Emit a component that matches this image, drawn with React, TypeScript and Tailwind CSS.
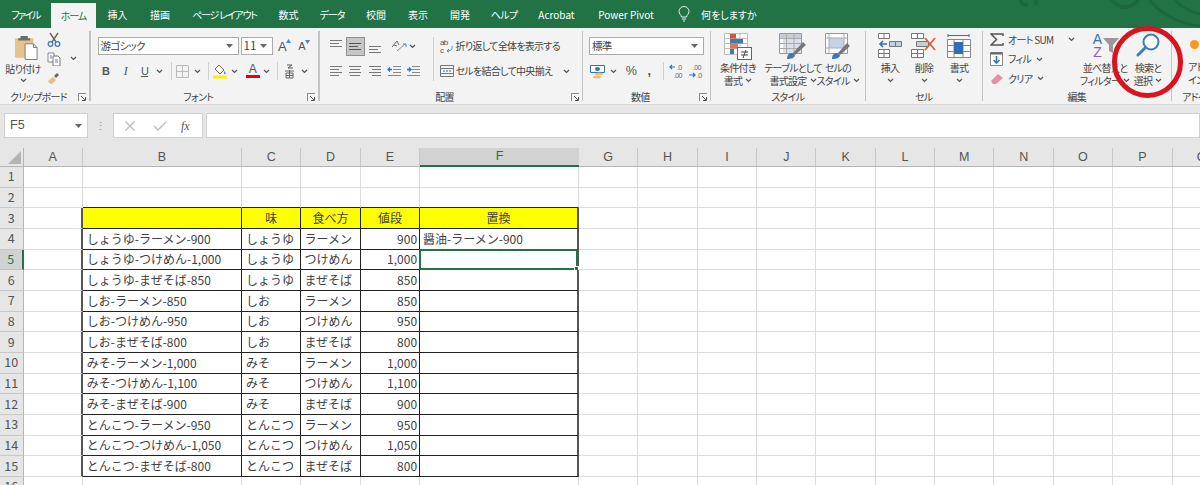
import type { ReactNode } from "react";

const tabs = [
  { label: "ファイル", w: "w-[51px] tracking-[-1.5px]" },
  { label: "ホーム", w: "w-[45px] tracking-[-1px]", active: true },
  { label: "挿入", w: "w-[43px]" },
  { label: "描画", w: "w-[42px]" },
  { label: "ページ レイアウト", w: "w-[87px] tracking-[-1.2px]" },
  { label: "数式", w: "w-[41px]" },
  { label: "データ", w: "w-[46px] tracking-[-1px]" },
  { label: "校閲", w: "w-[42px]" },
  { label: "表示", w: "w-[42px]" },
  { label: "開発", w: "w-[42px]" },
  { label: "ヘルプ", w: "w-[46px] tracking-[-0.7px]" },
  { label: "Acrobat", w: "w-[59px]" },
  { label: "Power Pivot", w: "w-[80px]" },
];

const columns = ["A", "B", "C", "D", "E", "F", "G", "H", "I", "J", "K", "L", "M", "N", "O", "P", "Q"];

const sheet = [
  ["しょうゆ-ラーメン-900", "しょうゆ", "ラーメン", "900", "醤油-ラーメン-900"],
  ["しょうゆ-つけめん-1,000", "しょうゆ", "つけめん", "1,000", ""],
  ["しょうゆ-まぜそば-850", "しょうゆ", "まぜそば", "850", ""],
  ["しお-ラーメン-850", "しお", "ラーメン", "850", ""],
  ["しお-つけめん-950", "しお", "つけめん", "950", ""],
  ["しお-まぜそば-800", "しお", "まぜそば", "800", ""],
  ["みそ-ラーメン-1,000", "みそ", "ラーメン", "1,000", ""],
  ["みそ-つけめん-1,100", "みそ", "つけめん", "1,100", ""],
  ["みそ-まぜそば-900", "みそ", "まぜそば", "900", ""],
  ["とんこつ-ラーメン-950", "とんこつ", "ラーメン", "950", ""],
  ["とんこつ-つけめん-1,050", "とんこつ", "つけめん", "1,050", ""],
  ["とんこつ-まぜそば-800", "とんこつ", "まぜそば", "800", ""],
];

function Chevron() {
  return (
    <svg width="7" height="5" viewBox="0 0 7 5" className="shrink-0">
      <path d="M1 1l2.5 2.5L6 1" fill="none" stroke="#555" strokeWidth="1.2" />
    </svg>
  );
}

function Caret() {
  return (
    <svg width="7" height="4" viewBox="0 0 7 4" className="shrink-0">
      <path d="M0 0h7L3.5 4z" fill="#666" />
    </svg>
  );
}

function Launcher() {
  return (
    <svg width="9" height="9" viewBox="0 0 9 9" className="absolute right-[2px] top-[3px]">
      <path d="M.5 8V.5H8" fill="none" stroke="#888" />
      <path d="M3 3l4 4M4 7.5h3.5V4" fill="none" stroke="#555" />
    </svg>
  );
}

function Lines({ y, align, selected }: { y: number[]; align: "l" | "c" | "r"; selected?: boolean }) {
  return (
    <svg width="14" height="16" viewBox="0 0 14 16">
      {y.map((v, i) => {
        const short = i % 2 === 1;
        const x1 = short && align === "r" ? 4 : short && align === "c" ? 2 : 1;
        const x2 = short && align === "l" ? 10 : short && align === "c" ? 12 : 13;
        return <path key={v} d={`M${x1} ${v + 0.5}H${x2}`} stroke={selected ? "#555" : "#777"} />;
      })}
    </svg>
  );
}

function Box({ className, children }: { className: string; children?: ReactNode }) {
  return <div className={`flex shrink-0 items-center justify-center ${className}`}>{children}</div>;
}

function Combo({ className, text, textClass }: { className: string; text: string; textClass?: string }) {
  return (
    <div className={`flex h-[18px] shrink-0 items-center justify-between border border-[#ababab] bg-white pl-[2px] pr-[5px] text-[10.5px] ${className}`}>
      <span className={textClass}>{text}</span>
      <Caret />
    </div>
  );
}

function Sep({ className }: { className: string }) {
  return <div className={`w-px shrink-0 bg-[#d0d0d0] ${className}`} />;
}

function Group({
  className,
  label,
  labelClass,
  launcher,
  children,
}: {
  className: string;
  label: string;
  labelClass?: string;
  launcher?: boolean;
  children: ReactNode;
}) {
  return (
    <div className={`relative flex h-full shrink-0 flex-col ${className}`}>
      <div className="h-[62px]">{children}</div>
      <div className={`relative flex h-[14px] items-center whitespace-nowrap leading-none ${labelClass ?? "justify-center"} ${launcher ? "pr-[12px]" : ""}`}>
        {label}
      </div>
      {launcher && (
        <div className="absolute bottom-0 right-0 h-[14px] w-[12px]">
          <Launcher />
        </div>
      )}
    </div>
  );
}

function GroupLine() {
  return <div className="my-[3px] w-[1.5px] shrink-0 bg-[#c4c4c4]" />;
}

function BigButton({ className, icon, lines }: { className: string; icon: ReactNode; lines: ReactNode[] }) {
  return (
    <div className={`flex shrink-0 flex-col items-center pt-[5px] ${className}`}>
      <div className="flex h-[28px] items-start justify-center">{icon}</div>
      {lines.map((line, i) => (
        <div key={i} className="flex h-[13px] items-center gap-[3px] whitespace-nowrap leading-none">
          {line}
        </div>
      ))}
    </div>
  );
}

function PasteIcon() {
  return (
    <svg width="24" height="27" viewBox="0 0 26 28">
      <rect x="1" y="4" width="20" height="21" rx="1.5" fill="#e6c38a" />
      <path d="M7 4V1.5h8V4h2.5v2.5h-13V4z" fill="#6d6d6d" />
      <path d="M12 10h9l4 4v13H12z" fill="#fff" stroke="#777" />
      <path d="M21 10v4h4" fill="none" stroke="#777" />
    </svg>
  );
}

function ScissorsIcon() {
  return (
    <svg width="14" height="15" viewBox="0 0 14 15">
      <path d="M3 1l6 9M11 1L5 10" stroke="#666" strokeWidth="1.4" fill="none" />
      <circle cx="3.5" cy="12" r="2.3" fill="none" stroke="#3f78b5" strokeWidth="1.3" />
      <circle cx="10.5" cy="12" r="2.3" fill="none" stroke="#3f78b5" strokeWidth="1.3" />
    </svg>
  );
}

function CopyIcon() {
  return (
    <svg width="14" height="14" viewBox="0 0 14 14">
      <path d="M1 1h6v9H1z" fill="#fff" stroke="#888" />
      <path d="M6 4h5l2 2v8H6z" fill="#fff" stroke="#777" />
      <path d="M8 8h3M8 10h3M3 4h2M3 6h2" stroke="#4a86c0" />
    </svg>
  );
}

function BrushIcon() {
  return (
    <svg width="14" height="14" viewBox="0 0 14 14">
      <path d="M1 10l5-4 3 3-4 4c-2 0-3-1-4-3z" fill="#e4bd7f" />
      <path d="M7 5l3-3 2 2-3 3z" fill="#666" />
    </svg>
  );
}

function SizeA({ up }: { up?: boolean }) {
  return (
    <div className="flex items-start">
      <span className={`font-['Liberation_Sans',sans-serif] leading-none text-[#555] ${up ? "text-[13px]" : "text-[11px]"}`}>A</span>
      <svg width="5" height="4" viewBox="0 0 5 4" className="-mt-[1px]">
        <path d={up ? "M0 4h5L2.5 0z" : "M0 0h5L2.5 4z"} fill="#4a86c0" />
      </svg>
    </div>
  );
}

function BordersIcon() {
  return (
    <svg width="13" height="13" viewBox="0 0 13 13">
      <path d="M.5.5h12v12H.5zM6.500.5v12M.5 6.500h12" fill="none" stroke="#bbb" />
    </svg>
  );
}

function FillIcon() {
  return (
    <svg width="15" height="15" viewBox="0 0 15 15">
      <path d="M6 1l5 5-4 4-5-5z" fill="#fff" stroke="#666" />
      <path d="M11 7c1 1 2 2 1.5 3-.7.5-1.5 0-1.5-1z" fill="#4a7fb5" />
      <rect x="0" y="11.5" width="14" height="3" fill="#ffef00" />
    </svg>
  );
}

function FontColorIcon() {
  return (
    <div className="flex w-[14px] flex-col items-center">
      <span className="font-['Liberation_Sans',sans-serif] text-[12px] leading-[11px] text-[#555]">A</span>
      <div className="h-[3px] w-[14px] bg-[#e60012]" />
    </div>
  );
}

function PhoneticIcon() {
  return (
    <svg width="11" height="15" viewBox="0 0 11 15">
      <path d="M3 1h5L4 4h5" fill="none" stroke="#555" />
      <path d="M1 7h9M2 9h7v5H2zM2 11.500h7M5.500 6v8" fill="none" stroke="#666" />
    </svg>
  );
}

function OrientIcon() {
  return (
    <svg width="16" height="14" viewBox="0 0 16 14">
      <path d="M1 8l5-6 2 4M3 6l3 1" fill="none" stroke="#666" />
      <path d="M6 12l8-7" stroke="#888" />
      <path d="M12 5h3v3" fill="none" stroke="#4a86c0" />
    </svg>
  );
}

function IndentIcon({ out }: { out?: boolean }) {
  return (
    <svg width="14" height="12" viewBox="0 0 14 12">
      <path d="M6 1.500h8M6 4.500h8M6 7.500h8M1 10.500h13" stroke="#888" />
      <path d={out ? "M5 4.500H1M3 2.500l-2 2 2 2" : "M1 4.500h4M3 2.500l2 2-2 2"} fill="none" stroke="#2f75b5" strokeWidth="1.3" />
    </svg>
  );
}

function WrapIcon() {
  return (
    <svg width="14" height="16" viewBox="0 0 14 16">
      <text x="0" y="7" fontSize="8" fill="#555" fontFamily="Liberation Sans">ab</text>
      <text x="0" y="15" fontSize="8" fill="#555" fontFamily="Liberation Sans">c</text>
      <path d="M12 8c1 4-2 5-5 5M9 11l-2 2 2 1" fill="none" stroke="#4a86c0" />
    </svg>
  );
}

function MergeIcon() {
  return (
    <svg width="14" height="14" viewBox="0 0 14 14">
      <path d="M.5 1.500h13v11H.5zM.5 4.500h13M.5 9.500h13" fill="none" stroke="#777" />
      <path d="M3 7h8" stroke="#2f75b5" strokeDasharray="2 1" />
    </svg>
  );
}

function AccountIcon() {
  return (
    <svg width="16" height="15" viewBox="0 0 16 15">
      <path d="M.5 1.500h14v7H.5z" fill="#fff" stroke="#2f75b5" />
      <ellipse cx="7.500" cy="5" rx="2.500" ry="2" fill="#2f75b5" />
      <ellipse cx="9" cy="10" rx="4" ry="1.500" fill="#e8c27e" />
      <ellipse cx="7" cy="13" rx="4" ry="1.500" fill="#e8c27e" />
    </svg>
  );
}

function DecimalIcon({ more }: { more?: boolean }) {
  return (
    <svg width="16" height="16" viewBox="0 0 16 16">
      <text x={more ? 8 : 5} y="7" fontSize="7" fill="#666" fontFamily="Liberation Sans">{more ? ".0" : ".00"}</text>
      <text x={more ? 5 : 9} y="15" fontSize="7" fill="#666" fontFamily="Liberation Sans">{more ? ".00" : ".0"}</text>
      <path d={more ? "M6 4H1M3 2L1 4l2 2" : "M1 12h6M5 10l2 2-2 2"} fill="none" stroke="#2f75b5" strokeWidth="1.2" />
    </svg>
  );
}

function CondIcon() {
  return (
    <svg width="28" height="27" viewBox="0 0 28 27">
      <path d="M.5.5h23v21H.5zM8 .5v21M16 .5v21M.5 5.500h23M.5 10.500h23M.5 15.500h23" fill="#fff" stroke="#bbb" />
      <rect x="6" y="1" width="6" height="4.500" fill="#c9573a" />
      <rect x="6" y="6" width="13" height="4.500" fill="#3f78b5" />
      <rect x="6" y="11" width="8" height="4.500" fill="#d77a4f" />
      <rect x="6" y="16" width="4" height="5" fill="#3f78b5" />
      <rect x="13.500" y="14.500" width="14" height="12" fill="#fff" stroke="#666" />
      <path d="M17 19h7M17 22h7M22 17l-3 8" stroke="#444" fill="none" />
    </svg>
  );
}

function TableIcon() {
  return (
    <svg width="28" height="27" viewBox="0 0 28 27">
      <path d="M.5.5h22v20H.5z" fill="#fff" stroke="#999" />
      <rect x="1" y="1" width="21" height="4" fill="#c3cedb" />
      <path d="M4 5h18v15H4z" fill="#d8e1ec" />
      <path d="M7.500.5v20M15 .5v20M.5 5.500h22M.5 10.500h22M.5 15.500h22" stroke="#aaa" />
      <path d="M14 20l10-11 3 3-11 10z" fill="#777" />
      <path d="M8 26c0-4 2-6 5-6l3 2c0 3-4 4-8 4z" fill="#3f78b5" />
    </svg>
  );
}

function StyleIcon() {
  return (
    <svg width="26" height="27" viewBox="0 0 26 27">
      <path d="M.5.5h22v20H.5z" fill="#fff" stroke="#999" />
      <rect x="4" y="5" width="15" height="10" fill="#c5d3e3" />
      <path d="M4 .5v20M19 .5v20M.5 5h22M.5 15h22" stroke="#aaa" />
      <path d="M13 20l9-10 3 3-10 9z" fill="#777" />
      <path d="M7 26c0-4 2-6 5-6l3 2c0 3-4 4-8 4z" fill="#3f78b5" />
    </svg>
  );
}

function InsertIcon() {
  return (
    <svg width="24" height="25" viewBox="0 0 24 25">
      <path d="M.5.5h11v5H.5zM6 .5v5M.5 16.500h11v8H.5zM6 16.500v8M.5 20.500h11" fill="#fff" stroke="#777" />
      <path d="M11.500 8.500h12v5h-12zM17.500 8.500v5" fill="#c3cfdc" stroke="#777" />
      <path d="M9 11H2M5 8l-3 3 3 3" fill="none" stroke="#2f75b5" strokeWidth="1.6" />
    </svg>
  );
}

function DeleteIcon() {
  return (
    <svg width="26" height="25" viewBox="0 0 26 25">
      <path d="M.5.5h12v5H.5zM6.500.5v5M.5 16.500h12v8H.5zM6.500 16.500v8M.5 20.500h12" fill="#fff" stroke="#777" />
      <path d="M5.500 8.500h12v5h-12z" fill="#c3cfdc" stroke="#777" />
      <path d="M14 5l10 12M24 5L14 17" stroke="#d9603b" strokeWidth="1.8" />
    </svg>
  );
}

function FormatIcon() {
  return (
    <svg width="24" height="27" viewBox="0 0 24 27">
      <path d="M1 2.500h21M1 1v3M22 1v3" stroke="#2f75b5" />
      <path d="M.5 6.500h23v18H.5zM7 6.500v18M16 6.500v18M.5 12.500h23M.5 18.500h23" fill="#fff" stroke="#888" />
      <rect x="7" y="9" width="9" height="12" fill="#2f6fb5" />
    </svg>
  );
}

function SigmaIcon() {
  return (
    <svg width="14" height="13" viewBox="0 0 14 13">
      <path d="M13 3V1H1l5.500 5.500L1 12h12v-2" fill="none" stroke="#555" strokeWidth="1.5" />
    </svg>
  );
}

function FillDownIcon() {
  return (
    <svg width="13" height="14" viewBox="0 0 13 14">
      <path d="M.5.5h12v13H.5z" fill="#fff" stroke="#888" />
      <path d="M.5 .5h12v2H.5z" fill="#666" />
      <path d="M6.500 4v7M3.500 8l3 3 3-3" fill="none" stroke="#2f75b5" strokeWidth="1.6" />
    </svg>
  );
}

function EraserIcon() {
  return (
    <svg width="14" height="12" viewBox="0 0 14 12">
      <path d="M1 8l7-7 5 4-7 6H3z" fill="#e98fa5" />
    </svg>
  );
}

function SortIcon() {
  return (
    <div className="flex h-[27px] w-[32px] pl-[3px] font-['Liberation_Sans',sans-serif] text-[14px] leading-[13px] tracking-normal">
      <div className="flex w-[11px] flex-col items-center">
        <span className="text-[#2f75b5]">A</span>
        <span className="text-[#8a5fb0]">Z</span>
      </div>
      <svg width="16" height="16" viewBox="0 0 16 16" className="mt-[5px]">
        <path d="M0 0h16l-6 7v8l-4-2V7z" fill="#999" />
      </svg>
    </div>
  );
}

function SearchIcon() {
  return (
    <svg width="24" height="24" viewBox="0 0 24 24">
      <circle cx="15" cy="9" r="7.500" fill="#fff" stroke="#3f7db8" strokeWidth="2" />
      <path d="M9.500 14.500L2 22" stroke="#3f7db8" strokeWidth="3" strokeLinecap="round" />
    </svg>
  );
}

function BulbIcon() {
  return (
    <svg width="12" height="16" viewBox="0 0 12 16">
      <path d="M3.500 11C3 8.500 1 8 1 5.500a5 5 0 0 1 10 0C11 8 9 8.500 8.500 11zM4 13h4M5 15h2" fill="none" stroke="#e8f1ec" />
    </svg>
  );
}

function Ribbon() {
  return (
    <div className="flex h-[76px] bg-[#f3f3f3] text-[10px] tracking-[-0.7px] text-[#444]">
      <Group className="w-[89px]" label="クリップボード" launcher>
        <div className="flex">
          <div className="flex w-[46px] flex-col items-center pl-[6px] pt-[6px]">
            <div className="h-[27px]">
              <PasteIcon />
            </div>
            <div className="-ml-[6px] mt-[1px] flex h-[13px] items-center whitespace-nowrap leading-none">貼り付け</div>
            <div className="-ml-[6px] mt-[3px]">
              <Chevron />
            </div>
          </div>
          <div className="flex w-[16px] flex-col items-center pt-[4px]">
            <Box className="h-[15px]"><ScissorsIcon /></Box>
            <Box className="mt-[4px] h-[15px]"><CopyIcon /></Box>
            <Box className="mt-[4px] h-[15px]"><BrushIcon /></Box>
          </div>
          <div className="pl-[8px] pt-[28px]">
            <Chevron />
          </div>
        </div>
      </Group>
      <GroupLine />
      <Group className="w-[227.500px]" label="フォント" launcher>
        <div className="mt-[9px] flex h-[18px] items-center pl-[7px]">
          <Combo className="w-[141px]" text="游ゴシック" />
          <Combo className="ml-[2px] w-[32px]" text="11" textClass="text-[11.5px] tracking-normal" />
          <Box className="ml-[2px] w-[20px]"><SizeA up /></Box>
          <Box className="w-[19px]"><SizeA /></Box>
        </div>
        <div className="mt-[7px] flex h-[18px] items-center pl-[5px]">
          <Box className="w-[20px] font-['Liberation_Sans',sans-serif] text-[11px] font-bold text-[#555]">B</Box>
          <Box className="w-[20px] font-['Liberation_Serif',serif] text-[12px] italic text-[#555]">I</Box>
          <Box className="w-[18px] font-['Liberation_Sans',sans-serif] text-[11px] text-[#555] underline">U</Box>
          <Box className="w-[12px]"><Chevron /></Box>
          <Sep className="ml-[5px] h-[18px]" />
          <Box className="ml-px w-[20px]"><BordersIcon /></Box>
          <Box className="w-[10px]"><Chevron /></Box>
          <Sep className="ml-[5px] h-[18px]" />
          <Box className="ml-[2px] w-[20px]"><FillIcon /></Box>
          <Box className="w-[8px]"><Chevron /></Box>
          <Box className="ml-[4px] w-[20px]"><FontColorIcon /></Box>
          <Box className="w-[8px]"><Chevron /></Box>
          <Sep className="ml-[6px] h-[18px]" />
          <Box className="ml-[2px] w-[20px]"><PhoneticIcon /></Box>
          <Box className="w-[10px]"><Chevron /></Box>
        </div>
      </Group>
      <GroupLine />
      <Group className="w-[262px]" label="配置" launcher>
        <div className="flex pt-[9px]">
          <div className="w-[113px] pl-[6px]">
            <div className="flex h-[18px] items-center">
              <Box className="w-[20px]"><Lines y={[2, 5, 8]} align="l" /></Box>
              <Box className="h-[19px] w-[19px] border border-[#8e8e8e] bg-[#c6c6c6]"><Lines y={[5, 8, 11]} align="l" selected /></Box>
              <Box className="w-[20px]"><Lines y={[8, 11, 14]} align="l" /></Box>
              <Box className="ml-[4px] w-[20px]"><OrientIcon /></Box>
              <Box className="w-[8px]"><Chevron /></Box>
            </div>
            <div className="mt-[7px] flex h-[18px] items-center">
              <Box className="w-[20px]"><Lines y={[3, 6, 9, 12]} align="l" /></Box>
              <Box className="w-[19px]"><Lines y={[3, 6, 9, 12]} align="c" /></Box>
              <Box className="w-[20px]"><Lines y={[3, 6, 9, 12]} align="r" /></Box>
              <Box className="w-[19px]"><IndentIcon out /></Box>
              <Box className="w-[19px]"><IndentIcon /></Box>
            </div>
          </div>
          <Sep className="h-[44px]" />
          <div className="pl-[6px]">
            <div className="flex h-[18px] items-center whitespace-nowrap leading-none">
              <Box className="w-[16px] justify-start"><WrapIcon /></Box>
              折り返して全体を表示する
            </div>
            <div className="mt-[7px] flex h-[18px] w-[130px] items-center whitespace-nowrap leading-none">
              <Box className="w-[16px] justify-start"><MergeIcon /></Box>
              セルを結合して中央揃え
              <div className="ml-auto"><Chevron /></div>
            </div>
          </div>
        </div>
      </Group>
      <GroupLine />
      <Group className="w-[126.500px]" label="数値" launcher>
        <div className="pl-[6px] pt-[9px]">
          <Combo className="w-[115px]" text="標準" />
          <div className="mt-[7px] flex h-[18px] items-center">
            <Box className="w-[18px]"><AccountIcon /></Box>
            <Box className="w-[12px]"><Chevron /></Box>
            <Box className="ml-[3px] w-[18px] font-['Liberation_Sans',sans-serif] text-[12.5px] text-[#555]">%</Box>
            <Box className="w-[18px] font-['Liberation_Sans',sans-serif] text-[12.5px] font-bold text-[#555]">,</Box>
            <Sep className="ml-[5px] h-[18px]" />
            <Box className="ml-[4px] w-[18px]"><DecimalIcon more /></Box>
            <Box className="ml-px w-[18px]"><DecimalIcon /></Box>
          </div>
        </div>
      </Group>
      <GroupLine />
      <Group className="w-[153.500px]" label="スタイル">
        <div className="flex">
          <BigButton className="w-[54px]" icon={<CondIcon />} lines={["条件付き", <>書式 <Chevron /></>]} />
          <BigButton className="ml-[2px] w-[52px]" icon={<TableIcon />} lines={["テーブルとして", <>書式設定 <Chevron /></>]} />
          <BigButton className="-ml-[2px] w-[42px]" icon={<StyleIcon />} lines={["セルの", <>スタイル <Chevron /></>]} />
        </div>
      </Group>
      <GroupLine />
      <Group className="w-[115.500px]" label="セル">
        <div className="flex pl-[7px]">
          <BigButton className="w-[34px]" icon={<InsertIcon />} lines={["挿入", <Chevron />]} />
          <BigButton className="w-[34px]" icon={<DeleteIcon />} lines={["削除", <Chevron />]} />
          <BigButton className="ml-px w-[34px]" icon={<FormatIcon />} lines={["書式", <Chevron />]} />
        </div>
      </Group>
      <GroupLine />
      <Group className="w-[187.500px]" label="編集">
        <div className="flex">
          <div className="w-[100px] whitespace-nowrap pl-[7px] pt-[2px] leading-none">
            <div className="flex h-[19.500px] items-center">
              <Box className="w-[18px] justify-start"><SigmaIcon /></Box>
              オート SUM
              <div className="ml-auto mr-[8px]"><Chevron /></div>
            </div>
            <div className="flex h-[19.500px] items-center">
              <Box className="w-[18px] justify-start"><FillDownIcon /></Box>
              フィル
              <div className="ml-[5px]"><Chevron /></div>
            </div>
            <div className="flex h-[19.500px] items-center">
              <Box className="w-[18px] justify-start"><EraserIcon /></Box>
              クリア
              <div className="ml-[5px]"><Chevron /></div>
            </div>
          </div>
          <BigButton className="w-[44px]" icon={<SortIcon />} lines={["並べ替えと", <>フィルター <Chevron /></>]} />
          <BigButton className="w-[42px]" icon={<SearchIcon />} lines={["検索と", <>選択 <Chevron /></>]} />
        </div>
      </Group>
      <GroupLine />
      <Group className="flex-1 overflow-hidden" label="アドイン" labelClass="justify-start pl-[10px]">
        <div className="whitespace-nowrap pl-[16px] pt-[12px] leading-[13px]">
          <div className="ml-[2px] h-[9px] w-[9px] rounded-full bg-[#f59a23]" />
          <div className="mt-[11px]">アド</div>
          <div>イン</div>
        </div>
      </Group>
    </div>
  );
}

function FormulaBar() {
  return (
    <div className="flex h-[44px] border-t border-[#d8d8d8] bg-[#e6e6e6] pb-[10px] pl-[4px] pt-[8px]">
      <div className="flex w-[84px] items-center justify-between border border-[#d0d0d0] bg-white px-[5px] font-['Liberation_Sans',sans-serif] text-[12.5px] text-[#555]">
        F5
        <Caret />
      </div>
      <div className="flex w-[25px] items-center justify-center text-[11px] leading-none text-[#999]">⋮</div>
      <div className="flex w-[90px] items-center border border-[#d0d0d0] bg-white pl-[10px]">
        <svg width="12" height="12" viewBox="0 0 12 12">
          <path d="M1.500 1.500l9 9M10.500 1.500l-9 9" stroke="#bbb" strokeWidth="1.300" />
        </svg>
        <svg width="14" height="12" viewBox="0 0 14 12" className="ml-[17px]">
          <path d="M1 6l4 4 8-8" fill="none" stroke="#bbb" strokeWidth="1.300" />
        </svg>
        <span className="ml-[14px] font-['Liberation_Serif',serif] text-[12px] italic leading-none text-[#555]">fx</span>
      </div>
      <div className="ml-[3px] flex-1 border border-[#d0d0d0] bg-white" />
    </div>
  );
}

function Sheet() {
  return (
    <div className="grid grid-cols-[23.500px_59.350px_159.200px_59.350px_59.350px_59.350px_159px_repeat(11,59.350px)] grid-rows-[19px] auto-rows-[20.670px] bg-white text-[12px] text-[#404040] [font-feature-settings:normal]">
      <div className="relative border-b border-r border-[#b5b5b5] bg-[#e6e6e6]">
        <div className="absolute bottom-[2px] right-[2px] h-0 w-0 border-b-[13px] border-l-[13px] border-b-[#b4b4b4] border-l-transparent" />
      </div>
      {columns.map((c) => (
        <div
          key={c}
          className={`flex items-center justify-center font-['Liberation_Sans',sans-serif] text-[12.500px] ${
            c === "F"
              ? "border-b-2 border-[#217346] bg-[#d2d2d2] text-[#217346]"
              : "border-b border-r border-b-[#b5b5b5] border-r-[#c8c8c8] bg-[#e6e6e6] text-[#555]"
          }`}
        >
          {c}
        </div>
      ))}
      {Array.from({ length: 16 }, (_, r) => r + 1).map((row) => {
        const data = row >= 4 && row <= 15 ? sheet[row - 4] : null;
        const inTable = row >= 3 && row <= 15;
        const bottomBlack = row >= 2 && row <= 15;
        const bottom = bottomBlack ? "border-b border-b-[#222]" : "border-b border-b-[#dcdcdc]";
        const grid = `${bottom} border-r ${inTable ? "border-r-[#222]" : "border-r-[#dcdcdc]"}`;
        const edge = `${bottom} ${inTable ? "border-r-2 border-r-[#555]" : "border-r border-r-[#dcdcdc]"}`;
        const plain = "border-b border-r border-b-[#dcdcdc] border-r-[#dcdcdc]";
        return (
          <div key={row} className="contents">
            <div
              className={`flex items-center justify-center text-[12.500px] ${
                row === 5
                  ? "border-b border-r-2 border-b-[#c0c0c0] border-r-[#217346] bg-[#d2d2d2] text-[#217346]"
                  : "border-b border-r border-b-[#c8c8c8] border-r-[#b5b5b5] bg-[#e6e6e6] text-[#555]"
              }`}
            >
              {row}
            </div>
            <div className={`border-b border-b-[#dcdcdc] ${inTable ? "border-r-2 border-r-[#555]" : "border-r border-r-[#dcdcdc]"}`} />
            <div className={`flex items-center overflow-hidden whitespace-nowrap pl-[4px] ${row === 3 ? "bg-[#ffff00]" : ""} ${grid}`}>{data?.[0]}</div>
            <div className={`flex items-center overflow-hidden whitespace-nowrap ${row === 3 ? "justify-center bg-[#ffff00]" : "pl-[4px]"} ${grid}`}>{row === 3 ? "味" : data?.[1]}</div>
            <div className={`flex items-center overflow-hidden whitespace-nowrap ${row === 3 ? "justify-center bg-[#ffff00]" : "pl-[3px]"} ${grid}`}>{row === 3 ? "食べ方" : data?.[2]}</div>
            <div className={`flex items-center overflow-hidden whitespace-nowrap ${row === 3 ? "justify-center bg-[#ffff00]" : "justify-end pr-[2px]"} ${grid}`}>{row === 3 ? "値段" : data?.[3]}</div>
            <div className={`relative flex items-center whitespace-nowrap ${row === 3 ? "justify-center bg-[#ffff00]" : "pl-[3px]"} ${edge}`}>
              {row === 3 ? "置換" : data?.[4]}
              {row === 5 && (
                <div className="absolute -inset-[1px] border-2 border-[#217346]">
                  <div className="absolute -bottom-[3px] -right-[3px] h-[5px] w-[5px] border border-white bg-[#217346]" />
                </div>
              )}
            </div>
            {columns.slice(6).map((c) => (
              <div key={c} className={plain} />
            ))}
          </div>
        );
      })}
    </div>
  );
}

export default function App() {
  return (
    <div className="relative h-[485px] w-[1200px] overflow-hidden bg-white font-['Noto_Sans_CJK_JP','Noto_Sans',sans-serif] [font-feature-settings:'palt']">
      <div className="relative flex h-[28px] items-end overflow-hidden bg-[#217346] text-[10px] text-white">
        <svg width="200" height="28" viewBox="0 0 200 28" className="absolute right-0 top-0">
          <circle cx="125" cy="-8" r="15" fill="none" stroke="#1d673e" strokeWidth="4" />
          <path d="M150 0c8 12 28 24 50 26M175 0c5 6 15 12 25 14" fill="none" stroke="#1d673e" strokeWidth="3" />
          <path d="M20 0c2 4 5 6 8 5M36 0v5" fill="none" stroke="#1d673e" strokeWidth="3" />
        </svg>
        {tabs.map((t) => (
          <div
            key={t.label}
            className={`relative flex items-center justify-center whitespace-nowrap ${t.w} ${
              t.active ? "h-[25px] bg-[#f3f3f3] pb-[1px] text-[#217346]" : "h-[28px]"
            }`}
          >
            {t.label}
          </div>
        ))}
        <div className="relative flex h-[28px] items-center pl-[12px]">
          <BulbIcon />
          <span className="ml-[11px]">何をしますか</span>
        </div>
      </div>
      <Ribbon />
      <FormulaBar />
      <Sheet />
      <div className="absolute left-[1112px] top-[26px] h-[72px] w-[71px] rounded-full border-[5px] border-[#d7141f]" />
    </div>
  );
}
